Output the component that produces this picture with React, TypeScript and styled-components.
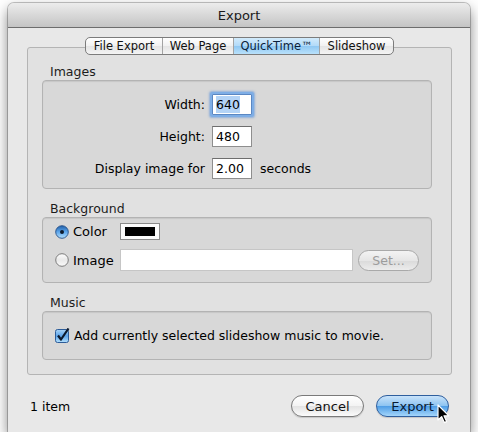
import styled, { createGlobalStyle } from 'styled-components';

const GlobalStyle = createGlobalStyle`
  html, body {
    margin: 0;
    padding: 0;
    background: #ffffff;
  }
  body {
    font-family: "DejaVu Sans", "Liberation Sans", sans-serif;
    font-size: 12.5px;
    color: #000;
  }
`;

const Window = styled.div`
  position: relative;
  margin: 3px 0 0 8px;
  width: 462px;
  height: 429px;
  display: flex;
  flex-direction: column;
  background: #e8e8e8;
  border-radius: 6px 6px 0 0;
  box-shadow: 0 0 0 1px rgba(0, 0, 0, 0.22), 0 6px 14px rgba(0, 0, 0, 0.5);
`;

const TitleBar = styled.div`
  height: 24px;
  display: flex;
  align-items: center;
  justify-content: center;
  font-size: 13px;
  color: #1a1a1a;
  background: linear-gradient(#ececec, #c4c4c4);
  border-bottom: 1px solid #6d6d6d;
  border-radius: 6px 6px 0 0;
`;

const TabArea = styled.div`
  margin: 9px 18px 0 19px;
  display: flex;
  flex-direction: column;
`;

const TabBar = styled.div`
  position: relative;
  z-index: 1;
  align-self: center;
  display: flex;
  height: 16px;
  margin-bottom: -8px;
  border: 1px solid #7c7c7c;
  border-radius: 5px;
  overflow: hidden;
  background: linear-gradient(#ffffff, #f1f1f1 50%, #e4e4e4 51%, #f4f4f4);
`;

const Tab = styled.div<{ $active?: boolean; $w: number }>`
  width: ${({ $w }) => $w}px;
  display: flex;
  align-items: center;
  justify-content: center;
  font-size: 11.5px;
  color: #111;
  border-left: 1px solid #a3a3a3;
  &:first-child {
    border-left: none;
  }
  ${({ $active }) =>
    $active &&
    `
    background: linear-gradient(#d2ebfc, #b1daf9 50%, #8fc8f3 51%, #b9e1fb);
    color: #0b1f3a;
  `}
`;

const Panel = styled.div`
  display: flex;
  flex-direction: column;
  gap: 12px;
  height: 328px;
  box-sizing: border-box;
  padding: 16px 19px 0 14px;
  background: #e1e1e1;
  border: 1px solid #b4b4b4;
  border-radius: 3px;
`;

const Group = styled.div`
  display: flex;
  flex-direction: column;
`;

const GroupLabel = styled.div`
  height: 16px;
  line-height: 16px;
  padding-left: 8px;
  color: #1c1c1c;
`;

const GroupBox = styled.div<{ $h: number }>`
  height: ${({ $h }) => $h}px;
  box-sizing: border-box;
  background: #d8d8d8;
  border: 1px solid #b3b3b3;
  border-radius: 4px;
  box-shadow: inset 0 1px 1px rgba(0, 0, 0, 0.08);
`;

const FormGrid = styled.div`
  display: grid;
  grid-template-columns: 162px 40px auto;
  grid-auto-rows: 21px;
  column-gap: 7px;
  row-gap: 11px;
  padding-top: 13px;
  align-items: center;
`;

const FieldLabel = styled.div`
  text-align: right;
`;

const TextField = styled.div<{ $focused?: boolean }>`
  height: 21px;
  box-sizing: border-box;
  display: flex;
  align-items: center;
  padding-left: 3px;
  background: #fff;
  border: 1px solid #8e8e8e;
  border-top-color: #6e6e6e;
  ${({ $focused }) =>
    $focused &&
    `
    border-color: #5b87c2;
    box-shadow: 0 0 0 2px #7eaee6, 0 0 2px 3px rgba(80, 140, 220, 0.5);
    border-radius: 1px;
  `}
`;

const Selected = styled.span`
  background: #b3d3f6;
  padding: 1px 0;
`;

const Suffix = styled.div`
  padding-left: 1px;
`;

const ChoiceGrid = styled.div`
  display: grid;
  grid-template-columns: 60px 1fr 61px;
  grid-template-rows: 17px 22px;
  row-gap: 9px;
  column-gap: 5px;
  padding: 5px 12px 0 12px;
  align-items: center;
`;

const Choice = styled.label`
  display: flex;
  align-items: center;
  gap: 4px;
  font-size: 13px;
`;

const Swatch = styled.div`
  width: 40px;
  height: 17px;
  box-sizing: border-box;
  padding: 3px 4px;
  background: #fbfbfb;
  border: 1px solid #8a8a8a;
  grid-column: 2 / 4;
  &::after {
    content: '';
    display: block;
    height: 100%;
    background: #000;
  }
`;

const WideField = styled(TextField)`
  height: 22px;
  border-color: #c6c6c6;
`;

const PillButton = styled.button<{ $variant?: 'default' | 'disabled' | 'primary' }>`
  height: 21px;
  box-sizing: border-box;
  padding: 0;
  border-radius: 11px;
  font-family: inherit;
  font-size: 12.5px;
  border: 1px solid #7a7a7a;
  color: #111;
  background: linear-gradient(#ffffff, #f3f3f3 50%, #e3e3e3 51%, #fbfbfb);
  box-shadow: 0 1px 1px rgba(0, 0, 0, 0.15);
  ${({ $variant }) =>
    $variant === 'disabled' &&
    `
    color: #9c9c9c;
    border-color: #a9a9a9;
    background: linear-gradient(#f3f3f3, #e6e6e6 50%, #dadada 51%, #ececec);
    box-shadow: none;
  `}
  ${({ $variant }) =>
    $variant === 'primary' &&
    `
    color: #081a33;
    border-color: #2f5f9e;
    background: linear-gradient(#c9e3fa, #8cc3f1 50%, #4e9de6 51%, #a4d6fb);
  `}
`;

const MusicRow = styled.div`
  height: 100%;
  display: flex;
  align-items: center;
  gap: 4px;
  padding-left: 12px;
`;

const Footer = styled.div`
  display: flex;
  align-items: center;
  padding: 20px 21px 0 22px;
`;

const Count = styled.div`
  flex: 1;
`;

const FooterButtons = styled.div`
  display: flex;
  gap: 12px;
  & > button {
    width: 73px;
    height: 22px;
    font-size: 13px;
  }
`;

const Cursor = styled.svg`
  position: absolute;
  left: 429px;
  top: 401px;
`;

const Radio = ({ on }: { on?: boolean }) => (
  <svg width="14" height="14" viewBox="0 0 14 14">
    <defs>
      <linearGradient id="rb" x1="0" y1="0" x2="0" y2="1">
        <stop offset="0" stopColor="#1f5fa8" />
        <stop offset="0.5" stopColor="#5ea7ec" />
        <stop offset="1" stopColor="#b6e0fb" />
      </linearGradient>
      <linearGradient id="rw" x1="0" y1="0" x2="0" y2="1">
        <stop offset="0" stopColor="#fdfdfd" />
        <stop offset="0.5" stopColor="#e9e9e9" />
        <stop offset="1" stopColor="#fafafa" />
      </linearGradient>
    </defs>
    <circle cx="7" cy="7" r="6.3" fill={on ? 'url(#rb)' : 'url(#rw)'} stroke={on ? '#264f87' : '#707070'} strokeWidth="0.9" />
    {on && <circle cx="7" cy="7" r="2" fill="#0d1a2b" />}
  </svg>
);

const Check = () => (
  <svg width="15" height="15" viewBox="0 0 15 15">
    <defs>
      <linearGradient id="cb" x1="0" y1="0" x2="0" y2="1">
        <stop offset="0" stopColor="#a8d3f6" />
        <stop offset="0.5" stopColor="#5ca4ea" />
        <stop offset="1" stopColor="#b6e1fc" />
      </linearGradient>
    </defs>
    <rect x="0.5" y="1.5" width="13" height="13" rx="2" fill="url(#cb)" stroke="#2d5c98" />
    <path d="M3 7.5 L6 11.5 L13.5 0.5" fill="none" stroke="#0c1a2e" strokeWidth="2.2" strokeLinejoin="round" />
  </svg>
);

export default function App() {
  return (
    <>
      <GlobalStyle />
      <Window>
        <TitleBar>Export</TitleBar>
        <TabArea>
          <TabBar>
            <Tab $w={76}>File Export</Tab>
            <Tab $w={70}>Web Page</Tab>
            <Tab $w={85} $active>
              QuickTime™
            </Tab>
            <Tab $w={73}>Slideshow</Tab>
          </TabBar>
          <Panel>
            <Group>
              <GroupLabel>Images</GroupLabel>
              <GroupBox $h={109}>
                <FormGrid>
                  <FieldLabel>Width:</FieldLabel>
                  <TextField $focused>
                    <Selected>640</Selected>
                  </TextField>
                  <span />
                  <FieldLabel>Height:</FieldLabel>
                  <TextField>480</TextField>
                  <span />
                  <FieldLabel>Display image for</FieldLabel>
                  <TextField>2.00</TextField>
                  <Suffix>seconds</Suffix>
                </FormGrid>
              </GroupBox>
            </Group>
            <Group>
              <GroupLabel>Background</GroupLabel>
              <GroupBox $h={66}>
                <ChoiceGrid>
                  <Choice>
                    <Radio on />
                    Color
                  </Choice>
                  <Swatch />
                  <Choice>
                    <Radio />
                    Image
                  </Choice>
                  <WideField />
                  <PillButton $variant="disabled">Set...</PillButton>
                </ChoiceGrid>
              </GroupBox>
            </Group>
            <Group>
              <GroupLabel>Music</GroupLabel>
              <GroupBox $h={49}>
                <MusicRow>
                  <Check />
                  Add currently selected slideshow music to movie.
                </MusicRow>
              </GroupBox>
            </Group>
          </Panel>
        </TabArea>
        <Footer>
          <Count>1 item</Count>
          <FooterButtons>
            <PillButton>Cancel</PillButton>
            <PillButton $variant="primary">Export</PillButton>
          </FooterButtons>
        </Footer>
        <Cursor width="13" height="20" viewBox="0 0 13 20">
          <path d="M1 1 L1 16 L4.6 12.6 L7.3 18.6 L9.6 17.6 L7 11.8 L11.8 11.8 Z" fill="#000" stroke="#fff" strokeWidth="1.2" strokeLinejoin="round" />
        </Cursor>
      </Window>
    </>
  );
}
